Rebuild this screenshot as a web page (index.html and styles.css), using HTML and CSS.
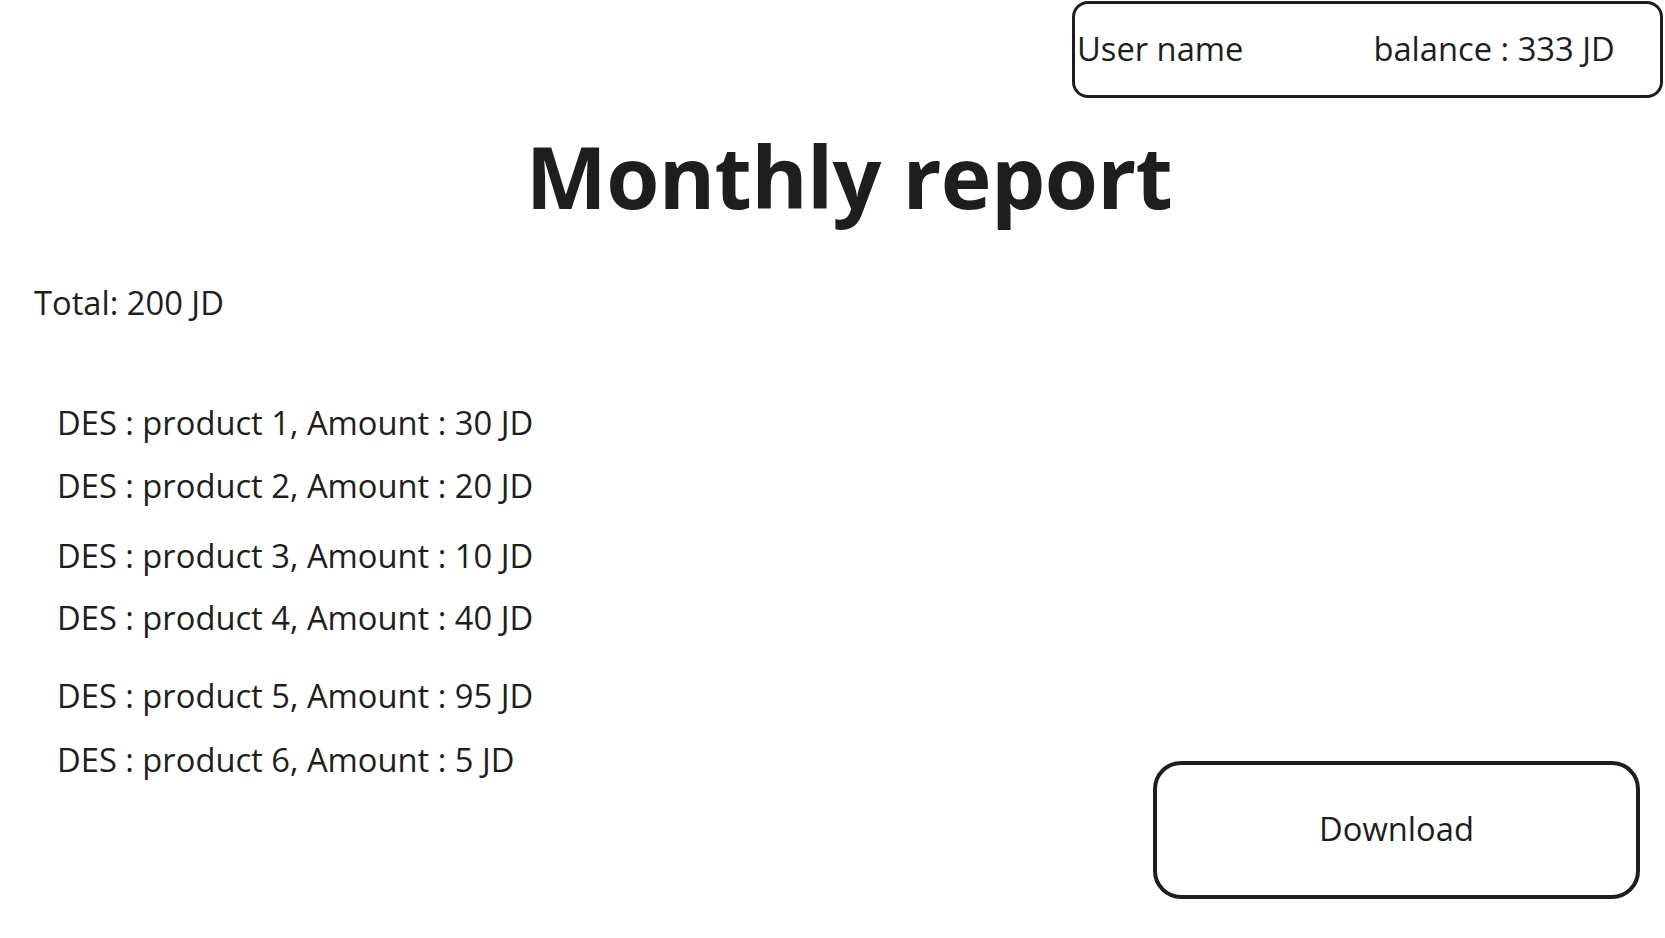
FILE: index.html
```html
<!DOCTYPE html>
<html lang="en">
<head>
<meta charset="utf-8">
<title>Monthly report</title>
<link rel="stylesheet" href="styles.css">
</head>
<body>
  <header class="topbar">
    <div class="account">
      <span class="account-name">User name</span>
      <span class="account-balance">balance : 333 JD</span>
    </div>
  </header>

  <h1 class="title">Monthly report</h1>

  <p class="total">Total: 200 JD</p>

  <section class="content">
    <ul class="items">
      <li class="item">DES : product 1, Amount : 30 JD</li>
      <li class="item">DES : product 2, Amount : 20 JD</li>
      <li class="item">DES : product 3, Amount : 10 JD</li>
      <li class="item">DES : product 4, Amount : 40 JD</li>
      <li class="item">DES : product 5, Amount : 95 JD</li>
      <li class="item">DES : product 6, Amount : 5 JD</li>
    </ul>
    <button class="download" type="button">Download</button>
  </section>
</body>
</html>
```

FILE: styles.css
```css
* {
  box-sizing: border-box;
}

html, body {
  margin: 0;
  padding: 0;
  background: #ffffff;
}

body {
  font-family: "Open Sans", "Noto Sans", sans-serif;
  color: #1e1e1e;
  width: 1665px;
  height: 938px;
  overflow: hidden;
}

.topbar {
  display: flex;
  justify-content: flex-end;
  padding: 1px 2px 0 0;
}

.account {
  width: 591px;
  height: 97px;
  border: 3.5px solid #1e1e1e;
  border-radius: 16px;
  display: flex;
  align-items: center;
  padding: 0 0 2px 2px;
  gap: 130px;
  font-size: 32.7px;
  line-height: 44px;
}

.title {
  margin: 18px 0 0 0;
  padding-left: 33px;
  text-align: center;
  font-size: 86px;
  font-weight: 700;
  letter-spacing: -0.7px;
  line-height: 120px;
}

.total {
  margin: 45px 0 0 34px;
  font-size: 32.7px;
  line-height: 44px;
}

.content {
  display: flex;
  justify-content: space-between;
  align-items: flex-start;
  margin-top: 76px;
  padding: 0 25px 0 57px;
}

.items {
  list-style: none;
  margin: 0;
  padding: 0;
  font-size: 32.7px;
  line-height: 44px;
}

.item:nth-child(2) { margin-top: 19px; }
.item:nth-child(3) { margin-top: 26px; }
.item:nth-child(4) { margin-top: 18px; }
.item:nth-child(5) { margin-top: 34px; }
.item:nth-child(6) { margin-top: 20px; }

.download {
  margin-top: 360px;
  width: 487px;
  height: 138px;
  border: 4.5px solid #1e1e1e;
  border-radius: 28px;
  background: #ffffff;
  color: #1e1e1e;
  font-family: "Open Sans", "Noto Sans", sans-serif;
  font-size: 32.7px;
  line-height: 44px;
  padding: 0 0 2px 0;
  cursor: pointer;
}
```
